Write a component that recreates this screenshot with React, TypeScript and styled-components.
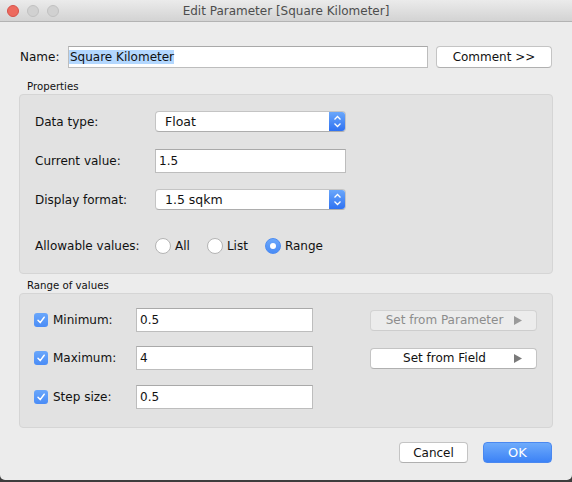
import React from "react";
import styled, { createGlobalStyle } from "styled-components";

const GlobalStyle = createGlobalStyle`
  html, body {
    margin: 0;
    padding: 0;
    background: #3d3d3d;
  }
  body {
    font-family: "DejaVu Sans", Verdana, sans-serif;
    font-size: 12px;
    color: #111;
  }
`;

const Window = styled.div`
  width: 572px;
  height: 480px;
  background: #ececec;
  border-radius: 0 0 5px 5px;
  display: flex;
  flex-direction: column;
  overflow: hidden;
`;

const TitleBar = styled.div`
  height: 21px;
  border-bottom: 1px solid #b3b3b3;
  background: linear-gradient(#ebebeb, #d3d3d3);
  display: grid;
  grid-template-columns: 1fr auto 1fr;
  align-items: center;
`;

const Lights = styled.div`
  display: flex;
  gap: 8px;
  padding-left: 7px;
`;

const Light = styled.span<{ $color: string; $edge: string }>`
  width: 12px;
  height: 12px;
  box-sizing: border-box;
  border-radius: 50%;
  background: ${(p) => p.$color};
  border: 1px solid ${(p) => p.$edge};
`;

const Title = styled.div`
  font-size: 12px;
  color: #4d4d4d;
`;

const Body = styled.div`
  display: flex;
  flex-direction: column;
  padding: 24px 19px 0;
`;

const NameRow = styled.div`
  display: flex;
  align-items: center;
  height: 22px;
  margin-left: 1px;
`;

const NameLabel = styled.span`
  width: 48px;
`;

const TextBox = styled.div<{ $w: number; $h: number; $pad?: number }>`
  width: ${(p) => p.$w}px;
  height: ${(p) => p.$h}px;
  box-sizing: border-box;
  background: #fff;
  border: 1px solid #bdbdbd;
  border-top-color: #a9a9a9;
  padding: 0 ${(p) => p.$pad ?? 3}px;
  display: flex;
  align-items: center;
`;

const Selected = styled.span`
  background: #b3d7fe;
  padding-left: 1px;
`;

const PushButton = styled.div<{ $w: number; $h?: number; $disabled?: boolean }>`
  width: ${(p) => p.$w}px;
  height: ${(p) => p.$h ?? 21}px;
  box-sizing: border-box;
  border-radius: 4px;
  border: 1px solid ${(p) => (p.$disabled ? "#d3d3d3" : "#c4c4c4")};
  border-bottom-color: ${(p) => (p.$disabled ? "#cdcdcd" : "#b0b0b0")};
  background: ${(p) => (p.$disabled ? "#ececec" : "#fff")};
  color: ${(p) => (p.$disabled ? "#8c8c8c" : "#111")};
  display: flex;
  align-items: center;
  justify-content: center;
`;

const PrimaryButton = styled(PushButton)`
  border: 1px solid #4a88f0;
  background: linear-gradient(#6eabfb, #3c82f6);
  color: #fff;
  font-size: 13px;
`;

const ButtonText = styled.span`
  flex: 1;
  text-align: center;
  padding-left: 4px;
`;

const ArrowMark = styled.svg`
  margin-right: 14px;
`;

const SectionLabel = styled.div<{ $top: number }>`
  margin-top: ${(p) => p.$top}px;
  height: 14px;
  line-height: 14px;
  padding-left: 8px;
  font-size: 10.2px;
  color: #111;
`;

const GroupBox = styled.div<{ $pad: string }>`
  background: #e2e2e2;
  border: 1px solid #d5d5d5;
  border-radius: 4px;
  padding: ${(p) => p.$pad};
`;

const FieldRow = styled.div<{ $gap?: number }>`
  display: flex;
  align-items: center;
  margin-top: ${(p) => p.$gap ?? 0}px;
`;

const FieldLabel = styled.span`
  width: 120px;
`;

const SelectBox = styled.div`
  width: 191px;
  height: 21px;
  box-sizing: border-box;
  display: flex;
  background: #fff;
  border: 1px solid #c4c4c4;
  border-bottom-color: #adadad;
  border-radius: 4px;
  overflow: hidden;
`;

const SelectText = styled.span`
  flex: 1;
  padding-left: 9px;
  display: flex;
  align-items: center;
  font-size: 12.5px;
`;

const SelectArrows = styled.span`
  width: 16px;
  background: linear-gradient(#6aa7fb, #2f72f2);
  display: flex;
  align-items: center;
  justify-content: center;
`;

const RadioGroup = styled.div`
  display: flex;
  align-items: center;
  gap: 17px;
  height: 18px;
`;

const RadioOption = styled.label`
  display: flex;
  align-items: center;
  gap: 4px;
`;

const RadioDot = styled.span<{ $on?: boolean }>`
  width: 16px;
  height: 16px;
  box-sizing: border-box;
  border-radius: 50%;
  display: flex;
  align-items: center;
  justify-content: center;
  background: ${(p) => (p.$on ? "linear-gradient(#6aa7fb, #4a8cf6)" : "#fff")};
  border: 1px solid ${(p) => (p.$on ? "#4d8cf2" : "#b4b4b4")};
  &::after {
    content: "";
    display: ${(p) => (p.$on ? "block" : "none")};
    width: 6px;
    height: 6px;
    border-radius: 50%;
    background: #fff;
  }
`;

const CheckCell = styled.label`
  width: 102px;
  display: flex;
  align-items: center;
  gap: 5px;
`;

const CheckBox = styled.span`
  width: 14px;
  height: 14px;
  border-radius: 3px;
  background: linear-gradient(#6aa7fb, #4a8cf6);
  display: flex;
  align-items: center;
  justify-content: center;
`;

const SideButton = styled.div`
  margin-left: 57px;
`;

const Footer = styled.div`
  display: flex;
  justify-content: flex-end;
  gap: 15px;
  margin-top: 14px;
  margin-right: 1px;
`;

function Select({ value }: { value: string }) {
  return (
    <SelectBox>
      <SelectText>{value}</SelectText>
      <SelectArrows>
        <svg width="9" height="13" viewBox="0 0 9 13">
          <path d="M1.5 4.5 L4.5 1.5 L7.5 4.5 M1.5 8.5 L4.5 11.5 L7.5 8.5" fill="none" stroke="#fff" strokeWidth="1.3" />
        </svg>
      </SelectArrows>
    </SelectBox>
  );
}

function Tick() {
  return (
    <svg width="10" height="10" viewBox="0 0 10 10">
      <path d="M2 5.2 L4.2 7.6 L8.2 2.2" fill="none" stroke="#fff" strokeWidth="1.5" strokeLinecap="round" strokeLinejoin="round" />
    </svg>
  );
}

function Arrow({ color }: { color: string }) {
  return (
    <ArrowMark width="8" height="9" viewBox="0 0 8 9">
      <polygon points="0,0 8,4.5 0,9" fill={color} />
    </ArrowMark>
  );
}

const ranges = [
  { label: "Minimum:", value: "0.5", gap: 0, button: "Set from Parameter", disabled: true },
  { label: "Maximum:", value: "4", gap: 14, button: "Set from Field", disabled: false },
  { label: "Step size:", value: "0.5", gap: 15, button: "", disabled: false },
];

export default function App() {
  return (
    <>
      <GlobalStyle />
      <Window>
        <TitleBar>
          <Lights>
            <Light $color="#ed6a5e" $edge="#d6524a" />
            <Light $color="#d1d1d1" $edge="#c1c1c1" />
            <Light $color="#d1d1d1" $edge="#c1c1c1" />
          </Lights>
          <Title>Edit Parameter [Square Kilometer]</Title>
          <span />
        </TitleBar>

        <Body>
          <NameRow>
            <NameLabel>Name:</NameLabel>
            <TextBox $w={360} $h={22} $pad={0}>
              <Selected>Square Kilometer</Selected>
            </TextBox>
            <PushButton $w={116} $h={22} style={{ marginLeft: 8 }}>
              Comment &gt;&gt;
            </PushButton>
          </NameRow>

          <SectionLabel $top={12}>Properties</SectionLabel>
          <GroupBox $pad="16px 15px 18px">
            <FieldRow>
              <FieldLabel>Data type:</FieldLabel>
              <Select value="Float" />
            </FieldRow>
            <FieldRow $gap={17}>
              <FieldLabel>Current value:</FieldLabel>
              <TextBox $w={191} $h={24}>1.5</TextBox>
            </FieldRow>
            <FieldRow $gap={16}>
              <FieldLabel>Display format:</FieldLabel>
              <Select value="1.5 sqkm" />
            </FieldRow>
            <FieldRow $gap={27}>
              <FieldLabel>Allowable values:</FieldLabel>
              <RadioGroup>
                <RadioOption>
                  <RadioDot />
                  All
                </RadioOption>
                <RadioOption>
                  <RadioDot />
                  List
                </RadioOption>
                <RadioOption>
                  <RadioDot $on />
                  Range
                </RadioOption>
              </RadioGroup>
            </FieldRow>
          </GroupBox>

          <SectionLabel $top={5}>Range of values</SectionLabel>
          <GroupBox $pad="14px 14px 18px">
            {ranges.map((r) => (
              <FieldRow key={r.label} $gap={r.gap}>
                <CheckCell>
                  <CheckBox>
                    <Tick />
                  </CheckBox>
                  {r.label}
                </CheckCell>
                <TextBox $w={177} $h={24}>{r.value}</TextBox>
                {r.button && (
                  <SideButton>
                    <PushButton $w={167} $disabled={r.disabled}>
                      <ButtonText>{r.button}</ButtonText>
                      <Arrow color={r.disabled ? "#9a9a9a" : "#7a7a7a"} />
                    </PushButton>
                  </SideButton>
                )}
              </FieldRow>
            ))}
          </GroupBox>

          <Footer>
            <PushButton $w={69}>Cancel</PushButton>
            <PrimaryButton $w={69}>OK</PrimaryButton>
          </Footer>
        </Body>
      </Window>
    </>
  );
}
